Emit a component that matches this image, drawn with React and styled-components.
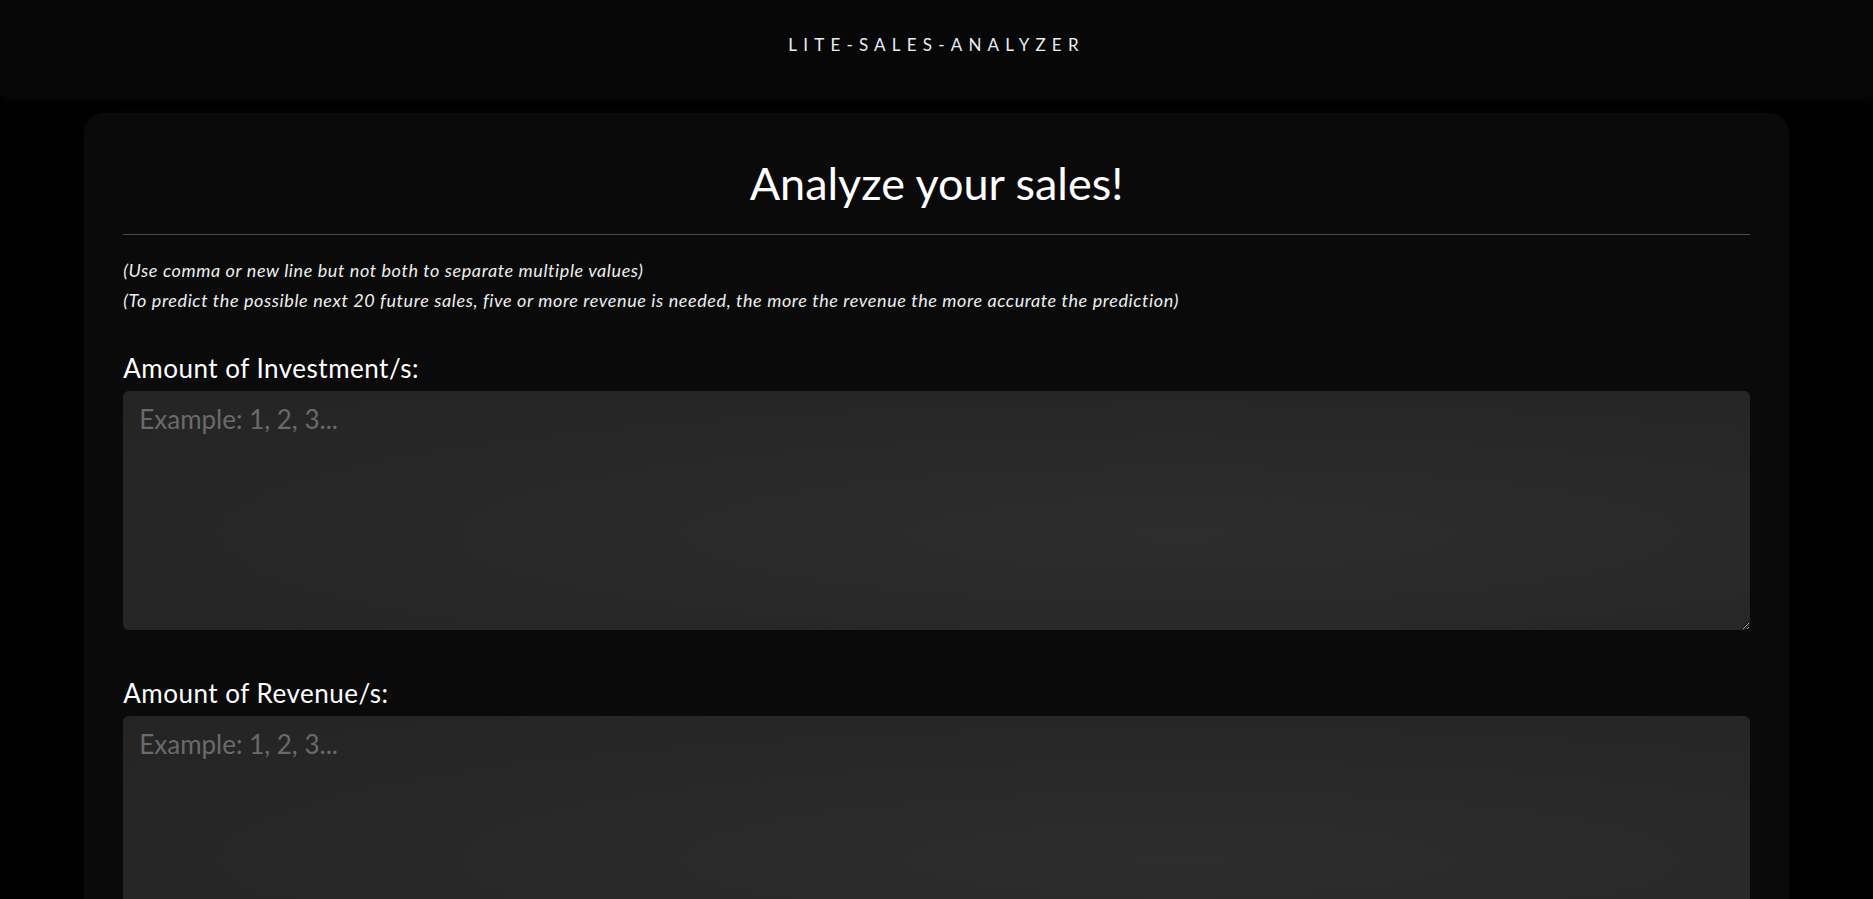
import React from "react";
import styled, { createGlobalStyle } from "styled-components";

const GlobalStyle = createGlobalStyle`
  html, body {
    margin: 0;
    padding: 0;
    background-color: #000000;
    font-family: "Lato", "Open Sans", sans-serif;
    color: #ffffff;
  }
  * {
    box-sizing: border-box;
  }
`;

const App = () => {
  return (
    <>
      <GlobalStyle />
      <Header>
        <Brand>LITE-SALES-ANALYZER</Brand>
      </Header>
      <Card>
        <Title>Analyze your sales!</Title>
        <Divider />
        <Notes>
          <Note>(Use comma or new line but not both to separate multiple values)</Note>
          <Note>
            (To predict the possible next 20 future sales, five or more revenue
            is needed, the more the revenue the more accurate the prediction)
          </Note>
        </Notes>
        <Field>
          <Label htmlFor="investment">Amount of Investment/s:</Label>
          <Input id="investment" placeholder="Example: 1, 2, 3..." />
        </Field>
        <Field>
          <Label htmlFor="revenue">Amount of Revenue/s:</Label>
          <Input id="revenue" placeholder="Example: 1, 2, 3..." />
        </Field>
      </Card>
    </>
  );
};

export default App;

// Styles:
const Header = styled.header`
  height: 96px;
  padding-top: 33px;
  display: flex;
  justify-content: center;
  align-items: flex-start;
  background-color: #070707;
  box-shadow: 0 3px 8px rgba(255, 255, 255, 0.035);
`;

const Brand = styled.div`
  font-size: 17px;
  line-height: 24px;
  letter-spacing: 6.2px;
  color: #e8eef5;
`;

const Card = styled.main`
  width: 91%;
  margin: 17px auto 0;
  padding: 42px 39px 40px;
  background-color: #0a0a0a;
  border-radius: 20px;
  box-shadow: 0 0 12px rgba(255, 255, 255, 0.02);
`;

const Title = styled.h1`
  margin: 0;
  text-align: center;
  font-size: 45px;
  line-height: 56px;
  font-weight: 400;
  color: #ffffff;
`;

const Divider = styled.hr`
  margin: 23px 0 0;
  border: none;
  height: 1px;
  background-color: #4a4a4a;
`;

const Notes = styled.div`
  margin-top: 20px;
  display: flex;
  flex-direction: column;
`;

const Note = styled.p`
  margin: 0;
  font-style: italic;
  font-size: 18px;
  line-height: 30px;
  letter-spacing: 0.6px;
  color: #eeeeee;
`;

const Field = styled.div`
  margin-top: 38px;
  display: flex;
  flex-direction: column;

  & + & {
    margin-top: 48px;
  }
`;

const Label = styled.label`
  font-size: 26px;
  line-height: 30px;
  letter-spacing: 0.5px;
  color: #ffffff;
  margin-bottom: 8px;
`;

const Input = styled.textarea`
  width: 100%;
  height: 239px;
  padding: 12px 16px;
  border: none;
  outline: none;
  border-radius: 6px;
  resize: vertical;
  font-family: "Lato", "Open Sans", sans-serif;
  font-size: 26px;
  color: #dddddd;
  background: radial-gradient(
    ellipse at 65% 60%,
    #2d2d2d 0%,
    #272727 60%,
    #242424 100%
  );

  &::placeholder {
    color: #6a6a6a;
  }
`;
